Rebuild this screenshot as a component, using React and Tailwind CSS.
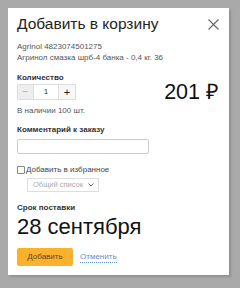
const App = () => {
  return (
    <div className="w-[240px] h-[288px] bg-[#a9a9a9] p-2 font-['Liberation_Sans',Arial,sans-serif]">
      <div className="w-[221px] h-[267px] bg-white shadow-[2px_2px_2px_rgba(0,0,0,0.15)] px-[9px] pt-[5px]">
        <div className="flex items-center justify-between h-[22px]">
          <h1 className="text-[15.5px] leading-[22px] text-[#222]">Добавить в корзину</h1>
          <svg width="11" height="11" viewBox="0 0 11 11" className="mr-[1px]">
            <path d="M0.5 0.5L10.5 10.5M10.5 0.5L0.5 10.5" stroke="#666" strokeWidth="1.1" />
          </svg>
        </div>
        <div className="mt-[6px] text-[8px] leading-[11px] text-[#555]">
          <div>Agrinol 4823074501275</div>
          <div>Агринол смазка шрб-4 банка - 0,4 кг. 36</div>
        </div>
        <div className="mt-[9px] text-[8px] font-bold text-[#333] leading-[11px]">Количество</div>
        <div className="mt-[1px] flex items-center justify-between h-[16px]">
          <div className="flex h-[16px] border border-[#ddd]">
            <div className="w-[15px] bg-[#eee] text-[#aaa] text-[10px] leading-[14px] text-center">−</div>
            <div className="w-[26px] bg-white text-[8px] leading-[14px] text-center text-[#333] border-x border-[#ddd]">1</div>
            <div className="w-[16px] bg-[#f7f7f7] text-[#222] text-[11px] leading-[14px] text-center">+</div>
          </div>
          <div className="text-[21.5px] leading-[16px] text-[#111] mr-[1px] whitespace-nowrap">201 ₽</div>
        </div>
        <div className="mt-[5px] text-[8px] leading-[11px] text-[#555]">В наличии 100 шт.</div>
        <div className="mt-[8px] text-[8px] font-bold text-[#333] leading-[11px]">Комментарий к заказу</div>
        <div className="mt-[4px] w-[132px] h-[15px] border border-[#ccc] rounded-[2px]"></div>
        <div className="mt-[10px] flex items-center gap-[1px] h-[11px]">
          <div className="w-[8px] h-[8px] border border-[#888] rounded-[1px]"></div>
          <span className="text-[8px] leading-[11px] text-[#444]">Добавить в избранное</span>
        </div>
        <div className="mt-[3px] ml-[10px] w-[72px] h-[14px] border border-[#ddd] flex items-center justify-between pl-[5px] pr-[4px]">
          <span className="text-[7.5px] text-[#aaa] leading-[10px] whitespace-nowrap">Общий список</span>
          <svg width="6" height="4" viewBox="0 0 6 4">
            <path d="M0.5 0.5L3 3L5.5 0.5" stroke="#666" fill="none" />
          </svg>
        </div>
        <div className="mt-[10px] text-[8px] font-bold text-[#333] leading-[11px]">Срок поставки</div>
        <div className="mt-[2px] text-[22px] leading-[24px] text-[#111]">28 сентября</div>
        <div className="mt-[9px] flex items-center gap-[7px]">
          <button className="w-[56px] h-[18px] bg-[#fbb12b] rounded-[2px] text-[8px] text-[#5a4a2e] leading-[18px]">Добавить</button>
          <span className="text-[8px] text-[#5b8fd6] leading-[10px] border-b border-dotted border-[#5b8fd6]">Отменить</span>
        </div>
      </div>
    </div>
  );
};
export default App;
